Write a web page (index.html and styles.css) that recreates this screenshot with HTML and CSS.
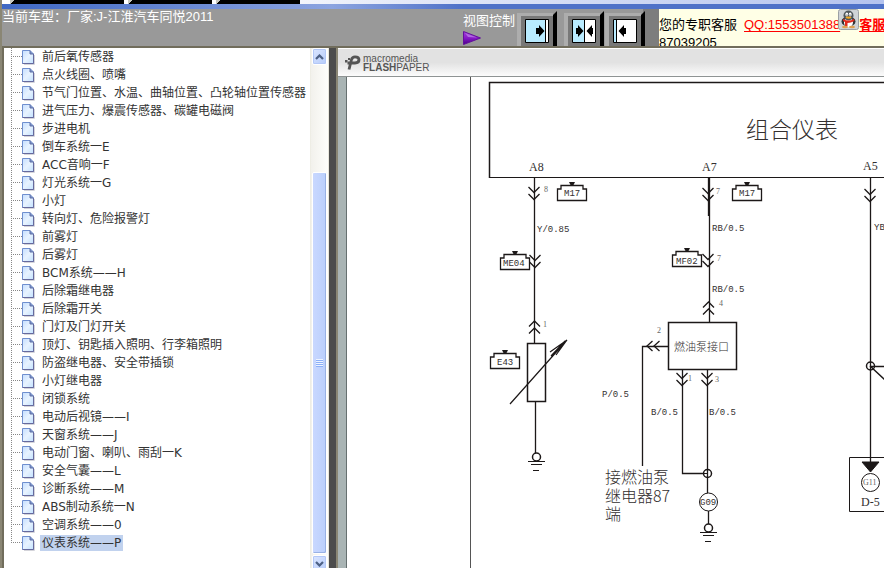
FILE: index.html
```html
<!DOCTYPE html>
<html lang="zh-CN">
<head>
<meta charset="utf-8">
<title>江淮汽车同悦2011</title>
<link rel="stylesheet" href="styles.css">
</head>
<body>
<svg class="defs" width="0" height="0" aria-hidden="true">
  <defs>
    <linearGradient id="paper" x1="0" y1="0" x2="1" y2="1"><stop offset="0" stop-color="#c4deff"/><stop offset=".5" stop-color="#e8f3ff"/><stop offset="1" stop-color="#c3e2ff"/></linearGradient>
    <linearGradient id="violet" x1="0" y1="0" x2="0" y2="1"><stop offset="0" stop-color="#a040d8"/><stop offset=".5" stop-color="#8818c8"/><stop offset="1" stop-color="#480088"/></linearGradient>
    <symbol id="doc" viewBox="0 0 13 15">
      <path d="M2 14.500h10.500V5" fill="none" stroke="#d4d4da"/>
      <path d="M.5.5h7.500l3.500 3.500v9.500H.5z" fill="url(#paper)" stroke="#6f8fcf"/>
      <path d="M8 .5v3.500h3.500" fill="#7d92c8" stroke="#5c6ea6"/>
      <path d="M11.500 4v9.500H.5" fill="none" stroke="#666a9e"/>
    </symbol>
    <symbol id="frame" viewBox="0 0 40 35">
      <path d="M0 2h36v33H0z" fill="#adadad"/>
      <path d="M36 4l4-4v35h-4z" fill="#000"/>
      <path d="M4 5h32v30H4z" fill="#787878"/>
    </symbol>
    <symbol id="plug" viewBox="0 0 30 20" overflow="visible">
      <path d="M.5 19.500V8H4V4.500H26V8H29.500V19.500z" fill="#fff" stroke="#1c1818" stroke-width="1.300"/>
      <path d="M12 1h6l-1.500 3h-3z" fill="#1c1818"/>
    </symbol>
    <symbol id="chev" viewBox="0 0 12 15"><path d="M.5 1L6 6.500 11.500 1M.5 8L6 13.500 11.500 8" fill="none" stroke="#1c1818" stroke-width="1.300"/></symbol>
  </defs>
</svg>

<div class="tabs"><span class="tab first"></span><span class="tab"></span><span class="tab"></span></div>
<div class="band"></div>

<header class="bar">
  <h1 class="model">当前车型：厂家:J-江淮汽车同悦2011</h1>
  <div class="views">
    <div class="views-title">视图控制
      <svg width="18" height="14"><path d="M.5.5L17.500 7 .5 13.500z" fill="url(#violet)" stroke="#64109c"/><path d="M2 2l12 4.500L5 6z" fill="#b068e0"/></svg>
    </div>
    <button type="button" class="view" aria-label="左侧视图"><svg width="40" height="35"><use href="#frame"/><path d="M8.500 8.500h23v23h-23z" fill="#b9ebff" stroke="#000"/><path d="M28.500 9v22" stroke="#000"/><path d="M29 9h2v22h-2z" fill="#fff"/><path d="M19 17h3v-3l5.500 6-5.500 6v-3h-3z"/></svg></button>
    <button type="button" class="view mid" aria-label="双栏视图"><svg width="40" height="35"><use href="#frame"/><path d="M8.500 8.500h23v23h-23z" fill="#fff" stroke="#000"/><path d="M9 9h11v22H9z" fill="#b9ebff"/><path d="M20.500 9v22" stroke="#000"/><path d="M12 17h2v-3l5.500 6-5.500 6v-3h-2zM29 17h-1v-3l-5.500 6 5.500 6v-3h1z"/></svg></button>
    <button type="button" class="view last" aria-label="右侧视图"><svg width="40" height="35"><use href="#frame"/><path d="M8.500 8.500h23v23h-23z" fill="#fff" stroke="#000"/><path d="M9 9h2v22H9z" fill="#b9ebff"/><path d="M11.500 9v22" stroke="#000"/><path d="M21 17h-2v-3l-5.500 6 5.500 6v-3h2z"/></svg></button>
  </div>
  <div class="service">
    <p>您的专职客服</p>
    <p class="contact"><a href="#qq">QQ:1553501388</a><svg class="qq" width="21" height="21" viewBox="0 0 21 21">
      <rect x=".5" y=".5" width="20" height="20" rx="2" fill="#cfd3d6" stroke="#9aa0a4"/>
      <ellipse cx="10.500" cy="12.500" rx="7" ry="5" fill="#303436"/>
      <ellipse cx="10.500" cy="13.500" rx="4.500" ry="4.500" fill="#fff"/>
      <ellipse cx="10.500" cy="6.500" rx="5" ry="5" fill="#50585c"/>
      <ellipse cx="8.800" cy="5.500" rx="1.400" ry="2" fill="#fff"/><ellipse cx="12.200" cy="5.500" rx="1.400" ry="2" fill="#fff"/>
      <circle cx="9" cy="6" r=".6"/><circle cx="12" cy="6" r=".6"/>
      <ellipse cx="10.500" cy="8.600" rx="3" ry="1.100" fill="#f5a81c"/>
      <path d="M5 10q5.500 3 11 0l.5 2q-4 2-7 2v3H7v-4l-2-1z" fill="#e0281c"/>
      <ellipse cx="7" cy="18" rx="3" ry="1.200" fill="#e0a050"/><ellipse cx="14" cy="18" rx="3" ry="1.200" fill="#e0a050"/>
    </svg><a class="strong" href="#service">客服</a></p>
    <p class="phone">87039205</p>
  </div>
</header>

<main class="main">
  <nav class="side" aria-label="系统目录">
    <ul class="tree">
      <li><svg><use href="#doc"/></svg><a href="#1">前后氧传感器</a></li>
      <li><svg><use href="#doc"/></svg><a href="#2">点火线圈、喷嘴</a></li>
      <li><svg><use href="#doc"/></svg><a href="#3">节气门位置、水温、曲轴位置、凸轮轴位置传感器</a></li>
      <li><svg><use href="#doc"/></svg><a href="#4">进气压力、爆震传感器、碳罐电磁阀</a></li>
      <li><svg><use href="#doc"/></svg><a href="#5">步进电机</a></li>
      <li><svg><use href="#doc"/></svg><a href="#6">倒车系统一E</a></li>
      <li><svg><use href="#doc"/></svg><a href="#7">ACC音响一F</a></li>
      <li><svg><use href="#doc"/></svg><a href="#8">灯光系统一G</a></li>
      <li><svg><use href="#doc"/></svg><a href="#9">小灯</a></li>
      <li><svg><use href="#doc"/></svg><a href="#10">转向灯、危险报警灯</a></li>
      <li><svg><use href="#doc"/></svg><a href="#11">前雾灯</a></li>
      <li><svg><use href="#doc"/></svg><a href="#12">后雾灯</a></li>
      <li><svg><use href="#doc"/></svg><a href="#13">BCM系统——H</a></li>
      <li><svg><use href="#doc"/></svg><a href="#14">后除霜继电器</a></li>
      <li><svg><use href="#doc"/></svg><a href="#15">后除霜开关</a></li>
      <li><svg><use href="#doc"/></svg><a href="#16">门灯及门灯开关</a></li>
      <li><svg><use href="#doc"/></svg><a href="#17">顶灯、钥匙插入照明、行李箱照明</a></li>
      <li><svg><use href="#doc"/></svg><a href="#18">防盗继电器、安全带插锁</a></li>
      <li><svg><use href="#doc"/></svg><a href="#19">小灯继电器</a></li>
      <li><svg><use href="#doc"/></svg><a href="#20">闭锁系统</a></li>
      <li><svg><use href="#doc"/></svg><a href="#21">电动后视镜——I</a></li>
      <li><svg><use href="#doc"/></svg><a href="#22">天窗系统——J</a></li>
      <li><svg><use href="#doc"/></svg><a href="#23">电动门窗、喇叭、雨刮一K</a></li>
      <li><svg><use href="#doc"/></svg><a href="#24">安全气囊——L</a></li>
      <li><svg><use href="#doc"/></svg><a href="#25">诊断系统——M</a></li>
      <li><svg><use href="#doc"/></svg><a href="#26">ABS制动系统一N</a></li>
      <li><svg><use href="#doc"/></svg><a href="#27">空调系统——0</a></li>
      <li><svg><use href="#doc"/></svg><a href="#28" class="current" aria-current="page">仪表系统——P</a></li>
    </ul>
    <div class="scroll">
      <button type="button" class="step" aria-label="向上滚动"><svg width="9" height="6"><path d="M1 5l3.500-3.500L8 5" fill="none" stroke="#4d6185" stroke-width="2.200"/></svg></button>
      <div class="track"></div>
      <div class="thumb"><span class="grip"></span></div>
      <button type="button" class="step" aria-label="向下滚动"><svg width="9" height="6"><path d="M1 1l3.500 3.500L8 1" fill="none" stroke="#4d6185" stroke-width="2.200"/></svg></button>
    </div>
  </nav>
  <div class="divider"></div>

  <section class="viewer">
    <div class="paperbar">
      <svg width="16" height="15" viewBox="0 0 16 15"><path d="M4 14.500L6.500 4.500Q7.300 1.800 10 1.800 14 1.800 14 4.800 14 8 10 8H2.500" fill="none" stroke="#555" stroke-width="2.800"/><path d="M0 5h2.500v2.500H0zM3 3h2v2H3z" fill="#555"/><path d="M9 4.500h2" stroke="#eee"/></svg>
      <div class="brand"><span>macromedia</span><span><b>FLASH</b>PAPER</span></div>
    </div>
    <div class="page">
      <svg class="diagram" role="img" aria-label="组合仪表电路图">
        <g transform="translate(-347 -77)" fill="none" stroke="#1c1818">
          <path d="M470.500 76V600" stroke="#555"/>
          <path d="M489.500 178V82.500H900" stroke-width="1.500"/>
          <path d="M489 177.500H900"/>
          <path d="M534.500 178V343M535.500 402V453M709.500 178V322M708.500 178V216M870.500 178V470M668 346.500H642.500V466M682.500 370V473.500H703M707.500 370V493M708.500 511V524" stroke-width="1.300"/>
          <rect x="527.500" y="343.500" width="18" height="58" stroke-width="1.500"/>
          <rect x="668.500" y="322.500" width="68" height="47" stroke-width="1.500"/>
          <path d="M510 404L567 340M567 340L550 352M567 340L556 355M565 341L551 356" stroke-width="1.200"/>
          <circle cx="536.500" cy="457" r="4" stroke-width="1.500"/><path d="M528 461.500h17M531 464.500h11M533 470.500h6" stroke-width="1.200"/>
          <circle cx="708.500" cy="528" r="4" stroke-width="1.500"/><path d="M700 532.500h17M703 535.500h11M705 541.500h6" stroke-width="1.200"/>
          <circle cx="707.500" cy="473.500" r="4" stroke-width="1.500"/><path d="M703 473.500h4"/>
          <circle cx="708.500" cy="502" r="9"/><circle cx="870.500" cy="366" r="4" stroke-width="1.500"/>
          <path d="M870 366.500H900M870 366L900 394" stroke-width="1.500"/>
          <path d="M900 457.500H849.500V511.500H900"/><circle cx="870.500" cy="482.500" r="9"/>
          <path d="M862 462h17l-8.500 10z" fill="#1c1818"/>
          <g stroke="none">
            <use href="#chev" x="528" y="186" width="12" height="15"/><use href="#chev" x="702" y="187" width="12" height="15"/>
            <use href="#chev" x="864" y="188" width="12" height="15"/><use href="#chev" x="529" y="254" width="12" height="15"/>
            <use href="#chev" x="702" y="253" width="12" height="15"/><use href="#chev" x="676" y="372" width="12" height="15"/>
            <use href="#chev" x="701" y="372" width="12" height="15"/>
            <use href="#plug" x="557" y="181" width="30" height="20"/><use href="#plug" x="732" y="181" width="30" height="20"/>
            <use href="#plug" x="500" y="250" width="30" height="20"/><use href="#plug" x="672" y="247" width="30" height="20"/>
            <use href="#plug" x="490" y="349" width="30" height="20"/>
          </g>
          <path d="M529 326.500L534.500 321l5.500 5.500M529 333.500L534.500 328l5.500 5.500M703 307.500L708.500 302l5.500 5.500M703 314.500L708.500 309l5.500 5.500M652.500 341L647 346l5.500 5M659.500 341L654 346l5.500 5" stroke-width="1.300"/>
          <g class="labels">
            <text class="title" x="746" y="138">组合仪表</text>
            <text class="pin" x="529" y="171">A8</text><text class="pin" x="702" y="171">A7</text><text class="pin" x="863" y="170">A5</text>
            <text class="num" x="544" y="192">8</text><text class="num" x="716" y="194">7</text>
            <text x="564" y="196">M17</text><text x="739" y="196">M17</text><text x="503" y="266">ME04</text><text x="676" y="264">MF02</text><text x="497" y="365">E43</text>
            <text x="537" y="232">Y/0.85</text><text x="712" y="231">RB/0.5</text><text x="712" y="292">RB/0.5</text><text x="874" y="230">YB</text>
            <text class="num" x="717" y="261">7</text><text class="num" x="719" y="306">4</text><text class="num" x="543" y="327">1</text><text class="num" x="657" y="333">2</text>
            <text class="num" x="688" y="381">1</text><text class="num" x="715" y="382">3</text>
            <text x="602" y="397">P/0.5</text><text x="651" y="415">B/0.5</text><text x="709" y="415">B/0.5</text>
            <text class="block" x="674" y="351">燃油泵接口</text>
            <text class="note" x="605" y="483">接燃油泵</text><text class="note" x="605" y="502">继电器87</text><text class="note" x="605" y="520">端</text>
            <text x="700" y="505">G09</text><text class="num" x="863" y="485">G11</text><text class="pin" x="861" y="506">D-5</text>
          </g>
        </g>
      </svg>
    </div>
  </section>
</main>
</body>
</html>
```
FILE: styles.css
```css
* { box-sizing: border-box; }

body {
  margin: 0;
  height: 100vh;
  display: flex;
  flex-direction: column;
  overflow: hidden;
  border-left: 2px solid #8a8674;
  font: 13px/16px "Liberation Sans", "Noto Sans CJK SC", sans-serif;
  background: #999;
}

.defs { position: absolute; }
h1, p, ul { margin: 0; padding: 0; }
button { padding: 0; border: 0; }

/* top strip */
.tabs {
  flex: 0 0 4px;
  display: flex;
  gap: 4px;
  padding-left: 8px;
  background: linear-gradient(to right, #fff 200px, #e4e9f8 400px, #b4c3ee);
}
.tab { width: 84px; background: linear-gradient(135deg, #c8c8c0 3px, #000 3px); }
.tab.first { width: 114px; }
.band {
  flex: 0 0 5px;
  background: linear-gradient(to right, #3f68c4, #8ca4e0 330px, #4f72c8 460px);
}

.bar {
  flex: 0 0 37px;
  display: flex;
  color: #fff;
  overflow: hidden;
}
.model { width: 461px; flex: none; font-size: 13px; font-weight: 400; }
.views { flex: none; display: flex; width: 196px; background: linear-gradient(to right, #999 180px, #7d7d7d 180px); }
.views-title { width: 54px; padding-top: 4px; white-space: nowrap; }
.views-title svg { display: block; margin-top: 2px; }
.view { width: 40px; height: 35px; margin-top: 2px; background: none; }
.view svg { display: block; }
.view.mid { margin-left: 7px; }
.view.last { margin-left: 1px; }

.service {
  flex: 1;
  min-width: 0;
  display: grid;
  grid-template-columns: 85px 1fr;
  grid-template-rows: 26px 18px;
  background: #ffffe6;
  color: #000;
}
.service p { padding-top: 8px; white-space: nowrap; }
.service .contact { display: flex; padding: 0; }
.service .phone { padding: 0; }
.contact a { color: #f00; height: 16px; margin-top: 8px; text-underline-offset: 2px; }
.contact .strong { font-weight: 700; }
.qq { flex: none; margin-left: -2px; }

.main { flex: 1; min-height: 0; display: flex; border-top: 2px solid #716d5c; }

/* directory tree */
.side {
  flex: 0 0 326px;
  display: flex;
  border-left: 2px solid #716d5c;
  background: #fff;
  overflow: hidden;
}
.tree {
  flex: 1;
  min-width: 0;
  padding-left: 7px;
  list-style: none;
  font: 12px/16px "DejaVu Sans", "Noto Sans CJK SC", sans-serif;
}
.tree li {
  display: flex;
  align-items: center;
  height: 18px;
  padding-left: 11px;
  --trunk: 18px;
  background:
    repeating-linear-gradient(to right, #888 0 1px, #fff 1px 2px) 0 8px / 11px 1px no-repeat,
    repeating-linear-gradient(to bottom, #888 0 1px, #fff 1px 2px) 0 0 / 1px var(--trunk) no-repeat;
}
.tree li:last-child { --trunk: 9px; }
.tree svg { flex: none; width: 13px; height: 15px; margin-right: 5px; }
.tree a { padding: 0 2px; color: #333; text-decoration: none; white-space: nowrap; }
.tree .current { background: #c1d2ee; }

.scroll {
  flex: 0 0 18px;
  display: flex;
  flex-direction: column;
  margin-bottom: -4px;
  padding: 0 1px;
  border-left: 1px solid #eeede5;
  background: linear-gradient(to right, #f2f1ec, #fefefb);
}
.step {
  flex: 0 0 17px;
  display: grid;
  place-items: center;
  border: 1px solid #fff;
  border-radius: 2px;
  box-shadow: inset 0 0 0 1px #b3c8f7;
  background: linear-gradient(135deg, #dbe6ff, #b5cbfa);
}
.track { flex: 107; }
.thumb {
  flex: 382;
  display: grid;
  place-items: center;
  margin-bottom: 1px;
  border: 1px solid #fff;
  border-radius: 2px;
  box-shadow: inset -1px -1px #98b1e4;
  background: linear-gradient(to right, #c9d8ff, #bacffc);
}
.grip { width: 7px; height: 8px; background: repeating-linear-gradient(#eef4ff 0 1px, #8cb0f8 1px 2px); }
.divider { flex: 0 0 8px; background: #4c4c4c; border-left: 1px solid #e8e6dc; }

/* document viewer */
.viewer {
  flex: 1;
  min-width: 0;
  display: flex;
  flex-direction: column;
  border-left: 2px solid #8a8674;
  background: #a9b4b4;
}
.paperbar {
  flex: 0 0 29px;
  display: flex;
  align-items: center;
  gap: 2px;
  padding-left: 7px;
  border-bottom: 1px solid #8f9494;
  border-top: 1px solid #fff;
  background: linear-gradient(#e2e2e2 50%, #fcfcfc);
}
.brand { display: grid; font: 10px/9px "Liberation Sans", sans-serif; color: #555; }
.page { flex: 1; min-height: 0; margin-left: 8px; border-left: 1px solid #667070; background: #fff; display: flex; }
.diagram { flex: 1; min-width: 0; height: 100%; }

.labels { fill: #332f2f; stroke: none; font: 9px "Liberation Mono", monospace; }
.labels .title { font: 300 23px "Noto Sans CJK SC", sans-serif; }
.labels .block { font: 300 11px "Noto Sans CJK SC", sans-serif; }
.labels .note { font: 300 16px "Noto Sans CJK SC", sans-serif; }
.labels .pin { font: 12px "Liberation Serif", serif; }
.labels .num { font: 8px "Liberation Serif", serif; fill: #666; }
```
